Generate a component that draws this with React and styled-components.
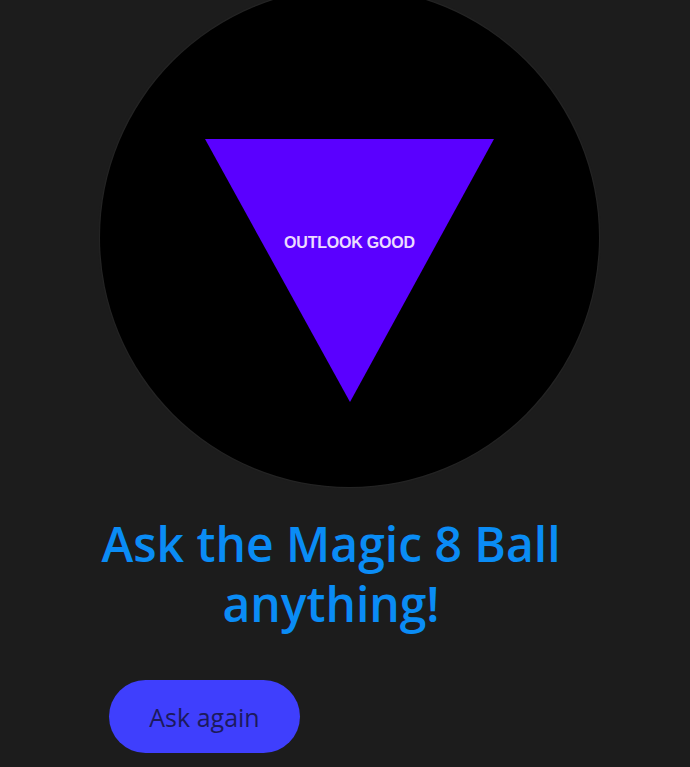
import React from 'react'
import styled, { createGlobalStyle } from "styled-components";

const GlobalStyle = createGlobalStyle`
  html, body {
    margin: 0;
    padding: 0;
    background: #1c1c1c;
    overflow: hidden;
  }
`;

const Page = styled.div`
  display: flex;
  flex-direction: column;
  width: 690px;
  height: 767px;
  font-family: "Open Sans", "Noto Sans", sans-serif;
`;

const Ball = styled.div`
  width: 499px;
  height: 499px;
  margin: -12px 0 0 100px;
  border-radius: 50%;
  background: #000;
  box-shadow: 0 0 1px 1px #262626;
  display: flex;
  justify-content: center;
  align-items: flex-start;
  padding-top: 151px;
  box-sizing: border-box;
`;

const Window = styled.div`
  position: relative;
  width: 289px;
  height: 263px;
  display: flex;
  justify-content: center;
  padding-top: 95px;
  box-sizing: border-box;
`;

const Triangle = styled.svg`
  position: absolute;
  inset: 0;
`;

const Answer = styled.span`
  position: relative;
  font-family: "Liberation Sans", Arial, sans-serif;
  font-weight: 700;
  font-size: 16px;
  letter-spacing: -0.2px;
  color: #ecdcff;
  text-transform: uppercase;
`;

const Heading = styled.h1`
  width: 662px;
  margin: 27px 0 0;
  text-align: center;
  font-family: "Open Sans", "Noto Sans", sans-serif;
  font-weight: 600;
  font-size: 48px;
  line-height: 60px;
  color: #0a8cf5;
`;

const Button = styled.button`
  width: 191px;
  height: 73px;
  margin: 46px 0 0 109px;
  border: none;
  border-radius: 37px;
  background: #3f3ffd;
  color: #1c1a5c;
  font-family: "Open Sans", "Noto Sans", sans-serif;
  font-size: 25px;
  cursor: pointer;
`;

export default function App() {
  return (
    <Page>
      <GlobalStyle />
      <Ball>
        <Window>
          <Triangle viewBox="0 0 289 263" width="289" height="263">
            <polygon points="0,0 289,0 145,263" fill="#5a00ff" />
          </Triangle>
          <Answer>Outlook good</Answer>
        </Window>
      </Ball>
      <Heading>Ask the Magic 8 Ball anything!</Heading>
      <Button>Ask again</Button>
    </Page>
  )
}
